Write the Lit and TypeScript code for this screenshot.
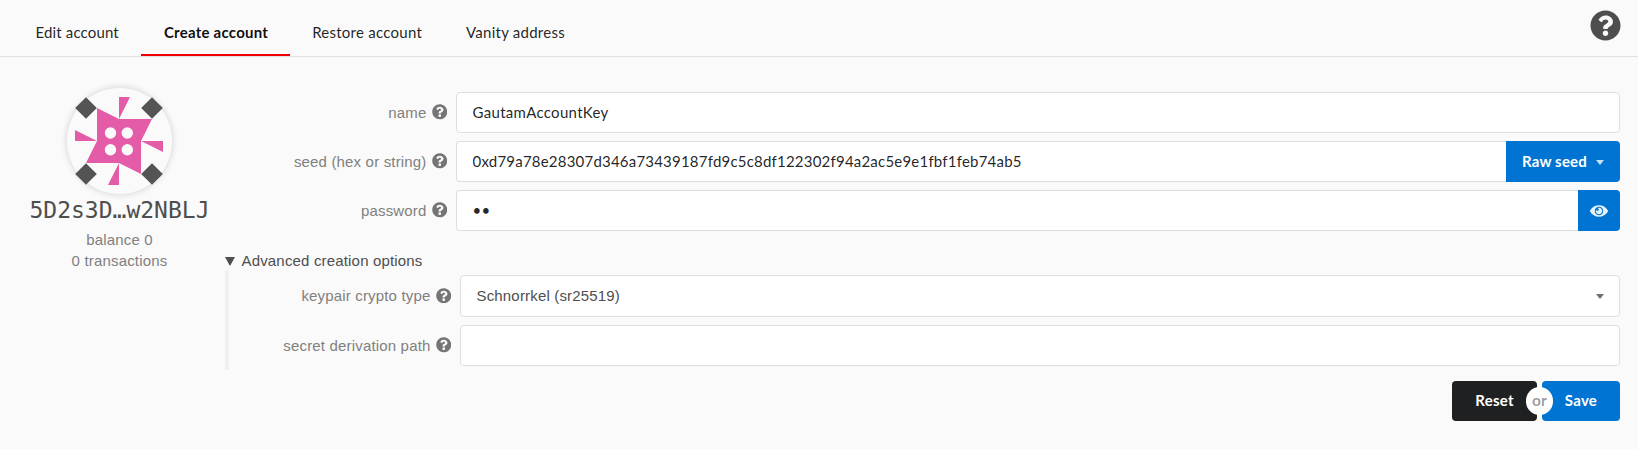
import { LitElement, html, svg, css } from "lit";
import { customElement, property } from "lit/decorators.js";

const questionPath =
  "M504 256c0 136.997-111.043 248-248 248S8 392.997 8 256C8 119.083 119.043 8 256 8s248 111.083 248 248zM262.655 90c-54.497 0-89.255 22.957-116.549 63.758-3.536 5.286-2.353 12.415 2.715 16.258l34.699 26.31c5.205 3.947 12.621 3.008 16.665-2.122 17.864-22.658 30.113-35.797 57.303-35.797 20.429 0 45.698 13.148 45.698 32.958 0 14.976-12.363 22.667-32.534 33.976C247.128 238.528 216 254.941 216 296v4c0 6.627 5.373 12 12 12h56c6.627 0 12-5.373 12-12v-1.333c0-28.462 83.186-29.647 83.186-106.667 0-58.002-60.165-102-116.531-102zM256 338c-25.365 0-46 20.635-46 46 0 25.364 20.635 46 46 46s46-20.636 46-46c0-25.365-20.635-46-46-46z";
const eyePath =
  "M569.354 231.631C512.969 135.949 407.81 72 288 72 168.14 72 63.004 135.994 6.646 231.631a47.999 47.999 0 0 0 0 48.739C63.031 376.051 168.19 440 288 440c119.86 0 224.996-63.994 281.354-159.631a47.997 47.997 0 0 0 0-48.738zM288 392c-75.162 0-136-60.827-136-136 0-75.162 60.826-136 136-136 75.162 0 136 60.826 136 136 0 75.162-60.826 136-136 136zm104-136c0 57.438-46.562 104-104 104s-104-46.562-104-104c0-17.708 4.431-34.379 12.236-48.973l-.001.032c0 23.651 19.173 42.823 42.824 42.823s42.824-19.173 42.824-42.823c0-23.651-19.173-42.824-42.824-42.824l-.032.001C253.621 156.431 270.292 152 288 152c57.438 0 104 46.562 104 104z";

@customElement("help-icon")
class HelpIcon extends LitElement {
  static styles = css`
    :host { display: block; width: 15.5px; height: 15.5px; }
    .glyph { display: block; width: 100%; height: 100%; fill: currentColor; }
  `;
  render() {
    return html`<svg class="glyph" viewBox="0 0 512 512"><path d=${questionPath}></path></svg>`;
  }
}

@customElement("account-identicon")
class AccountIdenticon extends LitElement {
  static styles = css`
    :host {
      display: grid;
      place-items: center;
      width: 105px;
      height: 106px;
      border-radius: 50%;
      box-shadow: 0 0 5px 2px #e0e0e0;
    }
    .art { display: block; width: 88px; height: 88px; margin-right: 1px; overflow: visible; }
    .dark { fill: #545454; }
    .pink { fill: #e45ba8; }
    .hole { fill: #fafafa; }
  `;
  render() {
    const corners = [[11, 11], [77, 11], [77, 77], [11, 77]];
    const holes = [[35.5, 36], [52.3, 36], [35.5, 52.7], [52.3, 52.7]];
    return html`<svg class="art" viewBox="0 0 88 88">
      ${corners.map(([x, y]) => svg`<path class="dark" d="M${x} ${y - 10.8}l10.8 10.8l-10.8 10.8l-10.8-10.8z"></path>`)}
      <path class="pink" d="M44 0H55L44 22zM66 44H88V55zM44 66V88H33zM0 33V44H22z"></path>
      <path class="pink" d="M22 11L44 22H77L66 44V77L44 66H11L22 44z"></path>
      ${holes.map(([x, y]) => svg`<circle class="hole" cx=${x} cy=${y} r="5.7"></circle>`)}
    </svg>`;
  }
}

@customElement("form-row")
class FormRow extends LitElement {
  @property() label = "";
  static styles = css`
    :host { display: flex; align-items: stretch; }
    .label {
      flex: 1;
      display: flex;
      justify-content: flex-end;
      align-items: center;
      gap: 5px;
      padding-right: 9px;
      color: #808080;
      white-space: nowrap;
    }
    .label help-icon { color: #757575; margin-top: -1px; }
    .control { flex: none; width: var(--control-width, 1164px); display: flex; }
  `;
  render() {
    return html`
      <div class="label"><span>${this.label}</span><help-icon></help-icon></div>
      <div class="control"><slot></slot></div>
    `;
  }
}

@customElement("app-root")
class AppRoot extends LitElement {
  static styles = css`
    :host {
      display: block;
      height: 449px;
      overflow: hidden;
      background: #fafafa;
      color: #4e4e4e;
      font: 15px/20px "Liberation Sans", Arial, sans-serif;
      letter-spacing: 0.17px;
    }
    * { box-sizing: border-box; }
    .bar {
      height: 57px;
      display: flex;
      align-items: flex-end;
      border-bottom: 1px solid #e0e1e2;
      padding: 0 17px 0 13px;
      font-family: Lato, sans-serif;
      letter-spacing: 0.25px;
    }
    .tab {
      height: 56px;
      padding: 22px 22px 0;
      color: rgba(0, 0, 0, 0.87);
      border-bottom: 2px solid transparent;
      white-space: nowrap;
    }
    .tab:first-child { padding: 22px 22.5px 0; letter-spacing: 0.15px; }
    .tab.active { padding: 22px 22px 0 22.5px; color: rgba(0, 0, 0, 0.95); font-weight: 700; border-color: #f00000; }
    .help-big { margin-left: auto; align-self: flex-start; margin-top: 10px; width: 31px; height: 31px; color: #4e4e4e; }
    .page { display: flex; padding: 31px 18px 0 14px; }
    .summary { width: 211px; display: flex; flex-direction: column; align-items: center; }
    .address { font: 23px/30px "DejaVu Sans Mono", monospace; letter-spacing: 0; margin-top: 1px; }
    .stats { margin-top: 4px; line-height: 21px; text-align: center; color: #808080; }
    .form { flex: 1; min-width: 0; display: flex; flex-direction: column; gap: 8px; padding-top: 4px; }
    .field {
      flex: 1;
      min-width: 0;
      height: 41px;
      margin: 0;
      padding: 0 15.5px 1px;
      border: 1px solid #dededf;
      border-radius: 4px;
      background: #fff;
      color: rgba(0, 0, 0, 0.87);
      font: 15px Lato, sans-serif;
      letter-spacing: 0.3px;
      outline: none;
    }
    .field.joined { border-right: 0; border-radius: 4px 0 0 4px; letter-spacing: 0.21px; }
    .addon {
      height: 41px;
      display: flex;
      align-items: center;
      justify-content: space-between;
      padding: 0 16px;
      background: #0074d2;
      color: #fff;
      border-radius: 0 4px 4px 0;
      font: 700 15px/20px Lato, sans-serif;
    }
    .addon.seed { width: 114px; padding-bottom: 1px; }
    .addon.view { width: 42px; padding: 0; justify-content: center; }
    .eye { width: 18px; height: 16px; fill: #fff; opacity: 0.9; }
    .caret { width: 8px; height: 5px; opacity: 0.8; margin-top: 3px; fill: currentColor; }
    .summary-line { display: flex; align-items: center; gap: 6.5px; padding-top: 12px; height: 32px; }
    .marker { width: 10px; height: 9px; fill: #4e4e4e; margin-top: 1px; }
    .advanced {
      display: flex;
      flex-direction: column;
      gap: 8px;
      border-left: 4px solid #f0f0f0;
      padding: 4px 0 4px;
      --control-width: 1160px;
    }
    .select {
      flex: 1;
      height: 42px;
      display: flex;
      align-items: center;
      justify-content: space-between;
      padding: 0 15px 0 15.5px;
      border: 1px solid #dededf;
      border-radius: 4px;
      background: #fff;
    }
    .select .caret { margin-top: 1px; }
    .actions {
      display: flex;
      justify-content: flex-end;
      padding: 11px 18px 0 0;
      font: 700 15px/39px Lato, sans-serif;
      letter-spacing: 0.25px;
      color: #fff;
      text-align: center;
    }
    .reset { width: 85px; height: 40px; background: #1f2021; border-radius: 4px; }
    .gap { position: relative; width: 5px; }
    .or {
      position: absolute;
      left: -11px;
      top: 6px;
      width: 27px;
      height: 28px;
      font-size: 15.5px;
      line-height: 27px;
      border-radius: 14px;
      background: #fff;
      color: rgba(0, 0, 0, 0.4);
    }
    .save { width: 78px; height: 40px; background: #0074d2; border-radius: 4px; }
  `;

  private caret() {
    return html`<svg class="caret" viewBox="0 0 8 5"><path d="M0 0H8L4 5z"></path></svg>`;
  }

  render() {
    const tabs = ["Edit account", "Create account", "Restore account", "Vanity address"];
    return html`
      <nav class="bar">
        ${tabs.map((t, i) => html`<div class="tab ${i === 1 ? "active" : ""}">${t}</div>`)}
        <help-icon class="help-big"></help-icon>
      </nav>
      <main class="page">
        <section class="summary">
          <account-identicon></account-identicon>
          <div class="address">5D2s3D…w2NBLJ</div>
          <div class="stats">balance 0<br />0 transactions</div>
        </section>
        <section class="form">
          <form-row label="name"><input class="field" value="GautamAccountKey" /></form-row>
          <form-row label="seed (hex or string)">
            <input class="field joined" value="0xd79a78e28307d346a73439187fd9c5c8df122302f94a2ac5e9e1fbf1feb74ab5" />
            <div class="addon seed"><span>Raw seed</span>${this.caret()}</div>
          </form-row>
          <form-row label="password">
            <input class="field joined" type="password" value="ab" />
            <div class="addon view"><svg class="eye" viewBox="0 0 576 512"><path d=${eyePath}></path></svg></div>
          </form-row>
          <div>
            <div class="summary-line">
              <svg class="marker" viewBox="0 0 10 9"><path d="M0 0H10L5 9z"></path></svg>
              <span>Advanced creation options</span>
            </div>
            <div class="advanced">
              <form-row label="keypair crypto type">
                <div class="select"><span>Schnorrkel (sr25519)</span>${this.caret()}</div>
              </form-row>
              <form-row label="secret derivation path"><input class="field" /></form-row>
            </div>
          </div>
        </section>
      </main>
      <div class="actions">
        <div class="reset">Reset</div>
        <div class="gap"><div class="or">or</div></div>
        <div class="save">Save</div>
      </div>
    `;
  }
}
